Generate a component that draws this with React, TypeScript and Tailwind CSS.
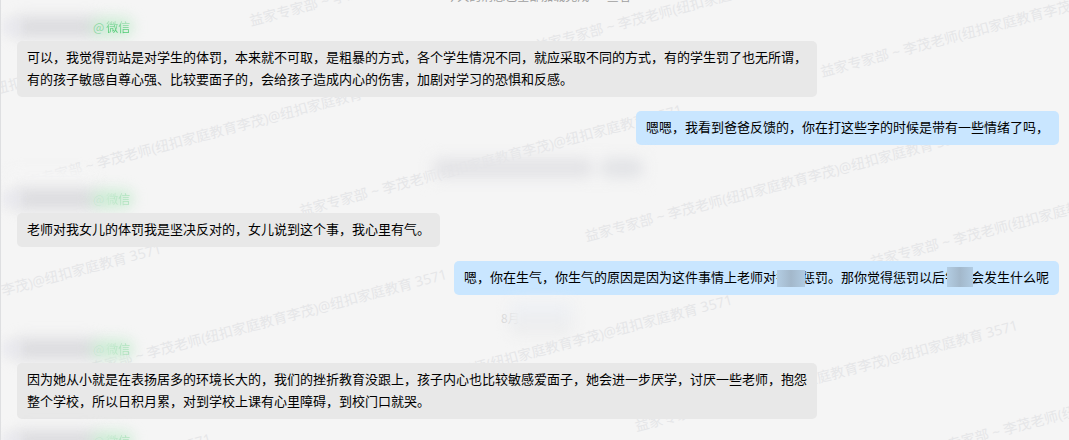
import type { ReactNode } from "react";

type Message = {
  id: number;
  mine: boolean;
  content: ReactNode;
};

const WATERMARK = "益家专家部 ~ 李茂老师(纽扣家庭教育李茂)@纽扣家庭教育 3571";

// 워터마크 시작 좌표 (행마다 50, 190 / 열마다 285.5, 25.5 이동), 화면 밖은 제외
const watermarks = [0, 1, 2, 3]
  .flatMap((row) =>
    [-3, -2, -1, 0, 1, 2, 3].map((col) => ({
      x: 250 + row * 50 + col * 285.5,
      y: 26 + row * 190 + col * 25.5,
    })),
  )
  .filter(({ x, y }) => x > -375 && x < 1069 && y > 0 && y < 550);

function Watermark() {
  return (
    <svg className="absolute inset-0 h-full w-full" aria-hidden="true">
      {watermarks.map(({ x, y }) => (
        <text
          key={`${x}-${y}`}
          transform={`translate(${x} ${y}) rotate(-14.9)`}
          className="fill-[#e5e6e8] font-['Open_Sans','Noto_Sans_CJK_SC',sans-serif] text-[14.07px]"
        >
          {WATERMARK}
        </text>
      ))}
    </svg>
  );
}

// 이름을 가리는 모자이크
function Mosaic({ className }: { className: string }) {
  return (
    <span className="relative inline-block w-[26px]">
      钅
      <span className={`absolute bg-linear-to-r from-[#b3cde3] via-[#a3b8cb] to-[#b0cbe2] ${className}`} />
    </span>
  );
}

function Sender({ variant }: { variant: "clear" | "hidden" | "partial" }) {
  return (
    <div className="relative flex h-[22px] shrink-0 items-center pl-[76px] text-[12px] leading-[18px]">
      {variant === "hidden" && (
        <div className="absolute -top-[22px] -left-[12px] h-[38px] w-[92px] rounded-xl bg-[#f5f5f5] blur-[6px]" />
      )}
      <div className="absolute -top-[4px] left-[76px] h-[20px] w-[36px] rounded-xl bg-[#f5f5f5]/80 blur-[5px]" />
      <div className="absolute -top-px -left-[4px] h-[18px] w-[86px] rounded-full bg-[#cdced3]/75 blur-[8px]" />
      <div className="absolute -top-px left-[74px] h-[18px] w-[42px] rounded-full bg-[#bfeac9]/75 blur-[7px]" />
      <div className="absolute top-0 -left-[17px] h-[16px] w-[22px] bg-[#e7e8ee]/60 blur-[5px]" />
      <span className={`relative -top-[3px] ${variant === "clear" ? "text-[#45c66c]/50" : "text-[#45c66c]/10"}`}>@</span>
      <span
        className={`relative -top-[3px] ml-[2px] bg-clip-text text-transparent ${
          variant === "clear"
            ? "bg-linear-to-b from-[#45c66c]/10 via-[#45c66c]/70 to-[#25c255]"
            : "bg-linear-to-r from-[#45c66c]/5 to-[#45c66c]/35"
        }`}
      >
        微信
      </span>
    </div>
  );
}

function Bubble({ message }: { message: Message }) {
  return (
    <div className={`relative flex shrink-0 ${message.mine ? "justify-end" : "justify-start"}`}>
      <div
        className={`max-w-[800px] rounded-[5px] px-[10px] pt-[5px] pb-[7px] text-[13px] leading-[22px] whitespace-nowrap text-black ${
          message.mine ? "bg-[#c9e6ff]" : "bg-[#e8e8e8]"
        }`}
      >
        {message.content}
      </div>
    </div>
  );
}

const messages: Message[] = [
  {
    id: 1,
    mine: false,
    content: (
      <>
        可以，我觉得罚站是对学生的体罚，本来就不可取，是粗暴的方式，各个学生情况不同，就应采取不同的方式，有的学生罚了也无所谓，
        <br />
        有的孩子敏感自尊心强、比较要面子的，会给孩子造成内心的伤害，加剧对学习的恐惧和反感。
      </>
    ),
  },
  {
    id: 2,
    mine: true,
    content: "嗯嗯，我看到爸爸反馈的，你在打这些字的时候是带有一些情绪了吗，",
  },
  {
    id: 3,
    mine: false,
    content: "老师对我女儿的体罚我是坚决反对的，女儿说到这个事，我心里有气。",
  },
  {
    id: 4,
    mine: true,
    content: (
      <>
        嗯，你在生气，你生气的原因是因为这件事情上老师对
        <Mosaic className="top-[4px] left-[1px] h-[17px] w-[28px]" />
        惩罚。那你觉得惩罚以后
        <Mosaic className="top-[1px] left-[2px] h-[20px] w-[26px]" />
        会发生什么呢
      </>
    ),
  },
  {
    id: 5,
    mine: false,
    content: (
      <>
        因为她从小就是在表扬居多的环境长大的，我们的挫折教育没跟上，孩子内心也比较敏感爱面子，她会进一步厌学，讨厌一些老师，抱怨
        <br />
        整个学校，所以日积月累，对到学校上课有心里障碍，到校门口就哭。
      </>
    ),
  },
];

export default function App() {
  return (
    <div className="relative h-[440px] w-[1069px] overflow-hidden border-l border-[#dedfe1] bg-[#f5f5f5] font-['Noto_Sans_CJK_SC',sans-serif]">
      <Watermark />
      <div className="relative flex h-full flex-col overflow-hidden pr-[10px] pl-[16px]">
        <div className="flex h-[19px] shrink-0 justify-center">
          <span className="-mt-[12px] text-[12px] leading-[16px] text-[#a0a0a0]">今天的消息已全部加载完成 一 查看</span>
        </div>

        <Sender variant="clear" />
        <Bubble message={messages[0]} />
        <div className="h-[14px] shrink-0" />
        <Bubble message={messages[1]} />

        {/* 흐리게 처리된 시스템 알림 */}
        <div className="flex h-[46px] shrink-0 items-center justify-center">
          <div className="flex h-[28px] w-[220px] items-center gap-[6px] bg-[#f5f5f5]/60 px-[4px] blur-[7px]">
            <div className="h-[20px] w-[162px] rounded-full bg-[#e3e3e6]" />
            <div className="h-[20px] flex-1 rounded-full bg-[#e2e3e6]" />
          </div>
        </div>

        <Sender variant="hidden" />
        <Bubble message={messages[2]} />
        <div className="h-[14px] shrink-0" />
        <Bubble message={messages[3]} />

        <div className="relative flex h-[46px] shrink-0 items-center justify-center text-[12px] text-[#d6d6d6]">
          <span className="w-[74px]">8月</span>
          <div className="absolute top-[6px] left-[492px] h-[34px] w-[64px] rounded-lg bg-linear-to-b from-[#eef1f6] to-[#ececec] blur-[7px]" />
        </div>

        <Sender variant="partial" />
        <Bubble message={messages[4]} />
        <div className="h-[14px] shrink-0" />
        <Sender variant="partial" />
      </div>
    </div>
  );
}
